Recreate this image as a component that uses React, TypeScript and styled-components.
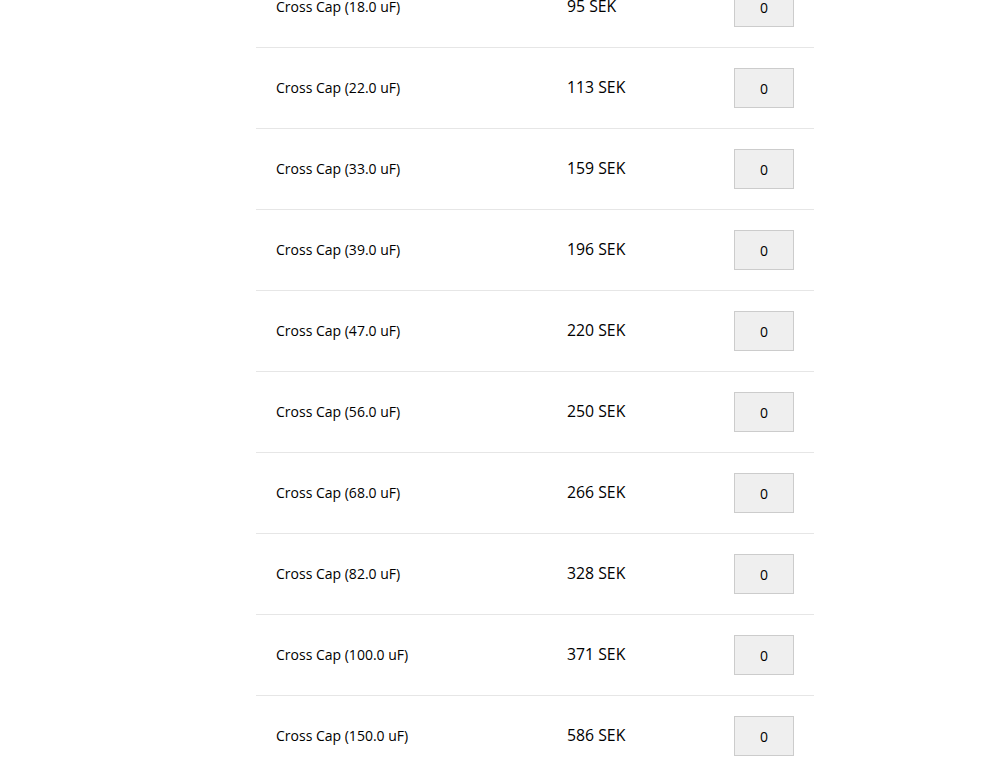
import styled, { createGlobalStyle } from 'styled-components';

interface Product {
    name: string;
    price: number;
}

const products: Product[] = [
    { name: 'Cross Cap (18.0 uF)', price: 95 },
    { name: 'Cross Cap (22.0 uF)', price: 113 },
    { name: 'Cross Cap (33.0 uF)', price: 159 },
    { name: 'Cross Cap (39.0 uF)', price: 196 },
    { name: 'Cross Cap (47.0 uF)', price: 220 },
    { name: 'Cross Cap (56.0 uF)', price: 250 },
    { name: 'Cross Cap (68.0 uF)', price: 266 },
    { name: 'Cross Cap (82.0 uF)', price: 328 },
    { name: 'Cross Cap (100.0 uF)', price: 371 },
    { name: 'Cross Cap (150.0 uF)', price: 586 },
];

const GlobalStyle = createGlobalStyle`
    html, body {
        margin: 0;
        padding: 0;
        background: #fff;
        overflow: hidden;
    }

    body {
        font-family: "Open Sans", "Liberation Sans", sans-serif;
        color: #000;
    }
`;

const App = () => {
    return (
        <>
        <GlobalStyle />
        <Page>
            <ProductList>
                {products.map(product => (
                    <ProductRow key={product.name}>
                        <Name>{product.name}</Name>
                        <Price>{product.price} SEK</Price>
                        <QuantityBox readOnly value="0" />
                    </ProductRow>
                ))}
            </ProductList>
        </Page>
        </>
    );
};

const Page = styled.main`
    height: 764px;
    overflow: hidden;
    padding-left: 256px;
`;

const ProductList = styled.ul`
    list-style: none;
    margin: -33px 0 0;
    padding: 0;
    width: 558px;
`;

const ProductRow = styled.li`
    display: grid;
    grid-template-columns: 291px 1fr 60px;
    align-items: center;
    padding: 20px 20px;
    border-bottom: 1px solid #e6e6e6;
`;

const Name = styled.span`
    font-size: 14px;
    color: #000;
    margin-top: -2px;
`;

const Price = styled.span`
    font-size: 15.8px;
    color: #000;
    margin-top: -2px;
`;

const QuantityBox = styled.input`
    box-sizing: border-box;
    width: 60px;
    height: 40px;
    border: 1px solid #cccccc;
    background: #efefef;
    font-family: "Open Sans", "Liberation Sans", sans-serif;
    font-size: 14px;
    color: #000;
    text-align: center;
    padding: 0;
    outline: none;
`;

export default App;
